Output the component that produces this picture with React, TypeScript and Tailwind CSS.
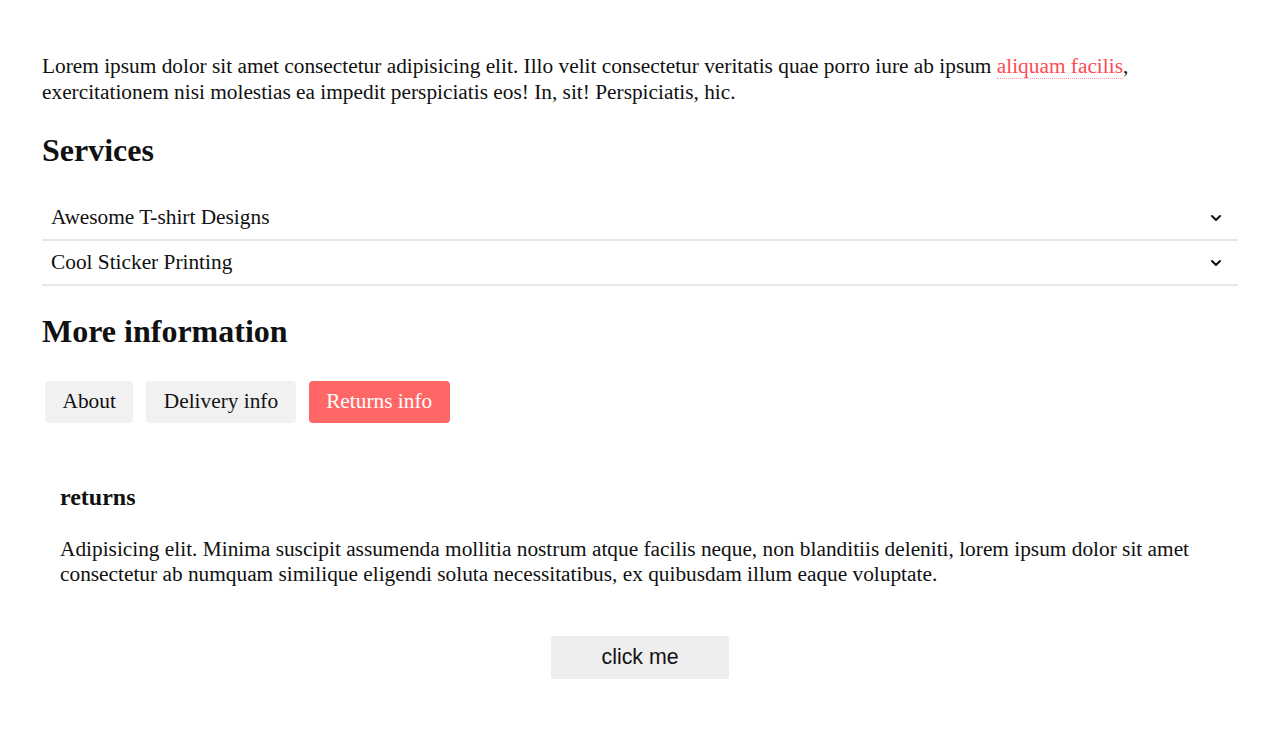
import React, { useState } from "react";

function Chevron() {
  return (
    <svg width="16" height="16" viewBox="0 0 24 24" fill="none" stroke="#111" strokeWidth="3" strokeLinecap="round" strokeLinejoin="round">
      <path d="M6 9l6 6 6-6" />
    </svg>
  );
}

export default function App() {
  const [tab, setTab] = useState("returns");
  const tabs = [
    { id: "about", label: "About" },
    { id: "delivery", label: "Delivery info" },
    { id: "returns", label: "Returns info" },
  ];
  return (
    <div className="min-h-[740px] bg-white text-[#111] px-[42px] pt-[54px]" style={{ fontFamily: '"Liberation Serif", "Times New Roman", serif' }}>
      <p className="text-[21.33px] leading-[25.5px]">
        Lorem ipsum dolor sit amet consectetur adipisicing elit. Illo velit consectetur veritatis quae porro iure ab ipsum{" "}
        <a className="text-[#ff4b55] border-b border-dotted border-[#ff9aa0]">aliquam facilis</a>, exercitationem nisi molestias ea impedit perspiciatis eos! In, sit! Perspiciatis, hic.
      </p>
      <h2 className="text-[32px] font-bold leading-[36px] mt-[27px]">Services</h2>
      <div className="mt-[28px]">
        {["Awesome T-shirt Designs", "Cool Sticker Printing"].map((t) => (
          <div key={t} className="flex items-center justify-between h-[45px] border-b-2 border-[#e8e8e8] pl-[9px] pr-[14px] text-[21.33px]">
            <span>{t}</span>
            <Chevron />
          </div>
        ))}
      </div>
      <h2 className="text-[32px] font-bold leading-[36px] mt-[27px]">More information</h2>
      <div className="flex gap-[13px] mt-[32px] ml-[3px]">
        {tabs.map((t) => (
          <button
            key={t.id}
            onClick={() => setTab(t.id)}
            className={`h-[42px] px-[17.5px] rounded-[4px] text-[21.33px] ${tab === t.id ? "bg-[#ff6666] text-white" : "bg-[#f1f1f1] text-[#111]"}`}
          >
            {t.label}
          </button>
        ))}
      </div>
      <div className="px-[18px] pt-[60px]">
        <h3 className="text-[24px] font-bold leading-[28px]">returns</h3>
        <p className="text-[21.33px] leading-[25px] mt-[26px]">
          Adipisicing elit. Minima suscipit assumenda mollitia nostrum atque facilis neque, non blanditiis deleniti, lorem ipsum dolor sit amet consectetur ab numquam similique eligendi soluta necessitatibus, ex quibusdam illum eaque voluptate.
        </p>
      </div>
      <div className="flex justify-center mt-[49px]">
        <button className="w-[178px] h-[43px] rounded-[3px] bg-[#eeeeee] text-[21.33px] text-[#111]" style={{ fontFamily: '"Liberation Sans", Arial, sans-serif' }}>
          click me
        </button>
      </div>
    </div>
  );
}
